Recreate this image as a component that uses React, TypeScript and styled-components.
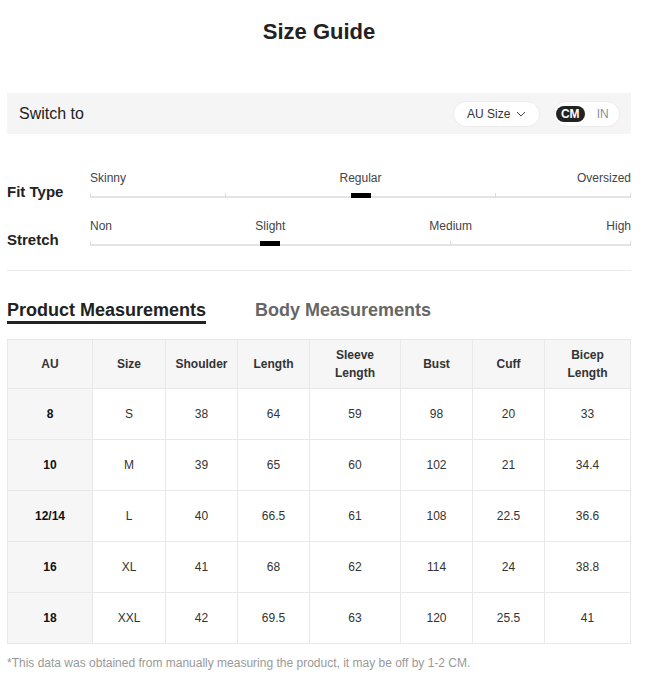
import * as React from "react";
import styled, { createGlobalStyle } from "styled-components";

const GlobalStyle = createGlobalStyle`
  body {
    margin: 0;
    background: #fff;
    font-family: "Liberation Sans", Arial, sans-serif;
    color: #222;
  }
`;

const Page = styled.div`
  width: 624px;
  margin-left: 7px;
`;

const Title = styled.h1`
  margin: 0;
  padding-top: 20px;
  font-size: 22px;
  line-height: 24px;
  font-weight: 700;
  text-align: center;
  color: #222;
`;

const SwitchBar = styled.div`
  display: flex;
  align-items: center;
  gap: 13px;
  margin-top: 49px;
  height: 41px;
  padding: 0 11px 0 12px;
  background: #f5f5f5;
`;

const SwitchLabel = styled.span`
  flex: 1;
  font-size: 16px;
  color: #222;
`;

const Pill = styled.div`
  display: flex;
  align-items: center;
  height: 26px;
  box-sizing: border-box;
  border: 1px solid #ececec;
  border-radius: 13px;
  background: #fff;
`;

const SizeSelect = styled(Pill)`
  width: 87px;
  padding-left: 13px;
  gap: 6px;
  font-size: 12px;
  color: #333;
`;

const UnitToggle = styled(Pill)`
  width: 67px;
  padding: 0 2px;
  gap: 4px;
`;

const Unit = styled.span<{ $active?: boolean }>`
  display: flex;
  align-items: center;
  justify-content: center;
  width: 29px;
  height: 16px;
  border-radius: 8px;
  font-size: 12px;
  background: ${(p) => (p.$active ? "#222" : "transparent")};
  color: ${(p) => (p.$active ? "#fff" : "#8a8f99")};
  font-weight: ${(p) => (p.$active ? 700 : 400)};
`;

const Scales = styled.div`
  display: flex;
  flex-direction: column;
  gap: 21px;
  margin-top: 37px;
`;

const ScaleRow = styled.div`
  display: grid;
  grid-template-columns: 83px 1fr;
  align-items: end;
`;

const ScaleName = styled.div`
  font-size: 15px;
  font-weight: 700;
  line-height: 20px;
  margin-bottom: -4px;
  color: #222;
`;

const Track = styled.div`
  position: relative;
  height: 27px;
`;

const Line = styled.div`
  position: absolute;
  left: 0;
  right: 0;
  bottom: 0;
  height: 2px;
  background: #e4e4e4;
`;

const Tick = styled.span`
  position: absolute;
  bottom: 0;
  width: 1px;
  height: 5px;
  margin-left: -0.5px;
  background: #dcdcdc;
`;

const Marker = styled.span`
  position: absolute;
  bottom: 0;
  width: 20px;
  height: 5px;
  margin-left: -10px;
  background: #000;
`;

const TickLabel = styled.span<{ $align: "start" | "center" | "end" }>`
  position: absolute;
  top: 0;
  font-size: 12px;
  line-height: 14px;
  color: #444;
  white-space: nowrap;
  transform: ${(p) =>
    p.$align === "center" ? "translateX(-50%)" : p.$align === "end" ? "translateX(-100%)" : "none"};
`;

const Divider = styled.hr`
  margin: 24px 0 0;
  border: 0;
  border-top: 1px solid #ececec;
`;

const Tabs = styled.div`
  display: flex;
  gap: 49px;
  margin-top: 30px;
`;

const Tab = styled.div<{ $active?: boolean }>`
  font-size: 18px;
  line-height: 18px;
  font-weight: 700;
  padding-bottom: 2px;
  border-bottom: 3px solid ${(p) => (p.$active ? "#222" : "transparent")};
  color: ${(p) => (p.$active ? "#222" : "#666")};
`;

const Table = styled.table`
  margin-top: 15px;
  width: 624px;
  table-layout: fixed;
  border-collapse: collapse;
  font-size: 12px;
  color: #333;
`;

const HeadCell = styled.th`
  height: 48px;
  padding: 0 4px;
  border: 1px solid #e8e8e8;
  background: #f6f6f6;
  font-weight: 700;
  line-height: 18px;
  text-align: center;
  color: #333;
`;

const Cell = styled.td<{ $key?: boolean }>`
  height: 50px;
  padding: 0;
  border: 1px solid #e8e8e8;
  text-align: center;
  background: ${(p) => (p.$key ? "#f6f6f6" : "#fff")};
  font-weight: ${(p) => (p.$key ? 700 : 400)};
  color: ${(p) => (p.$key ? "#111" : "#333")};
`;

const Note = styled.p`
  margin: 12px 0 0;
  font-size: 12px;
  line-height: 14px;
  color: #999;
`;

type Scale = {
  name: string;
  labels: { text: string; at: number }[];
  ticks: number[];
  value: number;
};

const scales: Scale[] = [
  {
    name: "Fit Type",
    labels: [
      { text: "Skinny", at: 0 },
      { text: "Regular", at: 50 },
      { text: "Oversized", at: 100 },
    ],
    ticks: [0, 25, 50, 75, 100],
    value: 50,
  },
  {
    name: "Stretch",
    labels: [
      { text: "Non", at: 0 },
      { text: "Slight", at: 100 / 3 },
      { text: "Medium", at: 200 / 3 },
      { text: "High", at: 100 },
    ],
    ticks: [0, 100 / 3, 200 / 3, 100],
    value: 100 / 3,
  },
];

const columns = [
  { title: "AU", width: 85 },
  { title: "Size", width: 73 },
  { title: "Shoulder", width: 72 },
  { title: "Length", width: 72 },
  { title: "Sleeve\nLength", width: 91 },
  { title: "Bust", width: 72 },
  { title: "Cuff", width: 72 },
  { title: "Bicep\nLength", width: 86 },
];

const rows = [
  ["8", "S", "38", "64", "59", "98", "20", "33"],
  ["10", "M", "39", "65", "60", "102", "21", "34.4"],
  ["12/14", "L", "40", "66.5", "61", "108", "22.5", "36.6"],
  ["16", "XL", "41", "68", "62", "114", "24", "38.8"],
  ["18", "XXL", "42", "69.5", "63", "120", "25.5", "41"],
];

const Chevron = () => (
  <svg width="10" height="6" viewBox="0 0 10 6" fill="none">
    <path d="M1 1l4 4 4-4" stroke="#444" strokeWidth="1" />
  </svg>
);

const App: React.FC = () => {
  return (
    <>
      <GlobalStyle />
      <Page>
        <Title>Size Guide</Title>

        <SwitchBar>
          <SwitchLabel>Switch to</SwitchLabel>
          <SizeSelect>
            AU Size <Chevron />
          </SizeSelect>
          <UnitToggle>
            <Unit $active>CM</Unit>
            <Unit>IN</Unit>
          </UnitToggle>
        </SwitchBar>

        <Scales>
          {scales.map((s) => (
            <ScaleRow key={s.name}>
              <ScaleName>{s.name}</ScaleName>
              <Track>
                {s.labels.map((l, i) => (
                  <TickLabel
                    key={l.text}
                    $align={i === 0 ? "start" : l.at === 100 ? "end" : "center"}
                    style={{ left: `${l.at}%` }}
                  >
                    {l.text}
                  </TickLabel>
                ))}
                <Line />
                {s.ticks.map((t) => (
                  <Tick key={t} style={{ left: `calc(${t}% + ${t === 0 ? 0.5 : t === 100 ? -0.5 : 0}px)` }} />
                ))}
                <Marker style={{ left: `${s.value}%` }} />
              </Track>
            </ScaleRow>
          ))}
        </Scales>

        <Divider />

        <Tabs>
          <Tab $active>Product Measurements</Tab>
          <Tab>Body Measurements</Tab>
        </Tabs>

        <Table>
          <colgroup>
            {columns.map((c) => (
              <col key={c.title} style={{ width: c.width }} />
            ))}
          </colgroup>
          <thead>
            <tr>
              {columns.map((c) => (
                <HeadCell key={c.title}>
                  {c.title.split("\n").map((part, i) => (
                    <React.Fragment key={part}>
                      {i > 0 && <br />}
                      {part}
                    </React.Fragment>
                  ))}
                </HeadCell>
              ))}
            </tr>
          </thead>
          <tbody>
            {rows.map((r) => (
              <tr key={r[0]}>
                {r.map((v, i) => (
                  <Cell key={i} $key={i === 0}>
                    {v}
                  </Cell>
                ))}
              </tr>
            ))}
          </tbody>
        </Table>

        <Note>*This data was obtained from manually measuring the product, it may be off by 1-2 CM.</Note>
      </Page>
    </>
  );
};

export default App;
